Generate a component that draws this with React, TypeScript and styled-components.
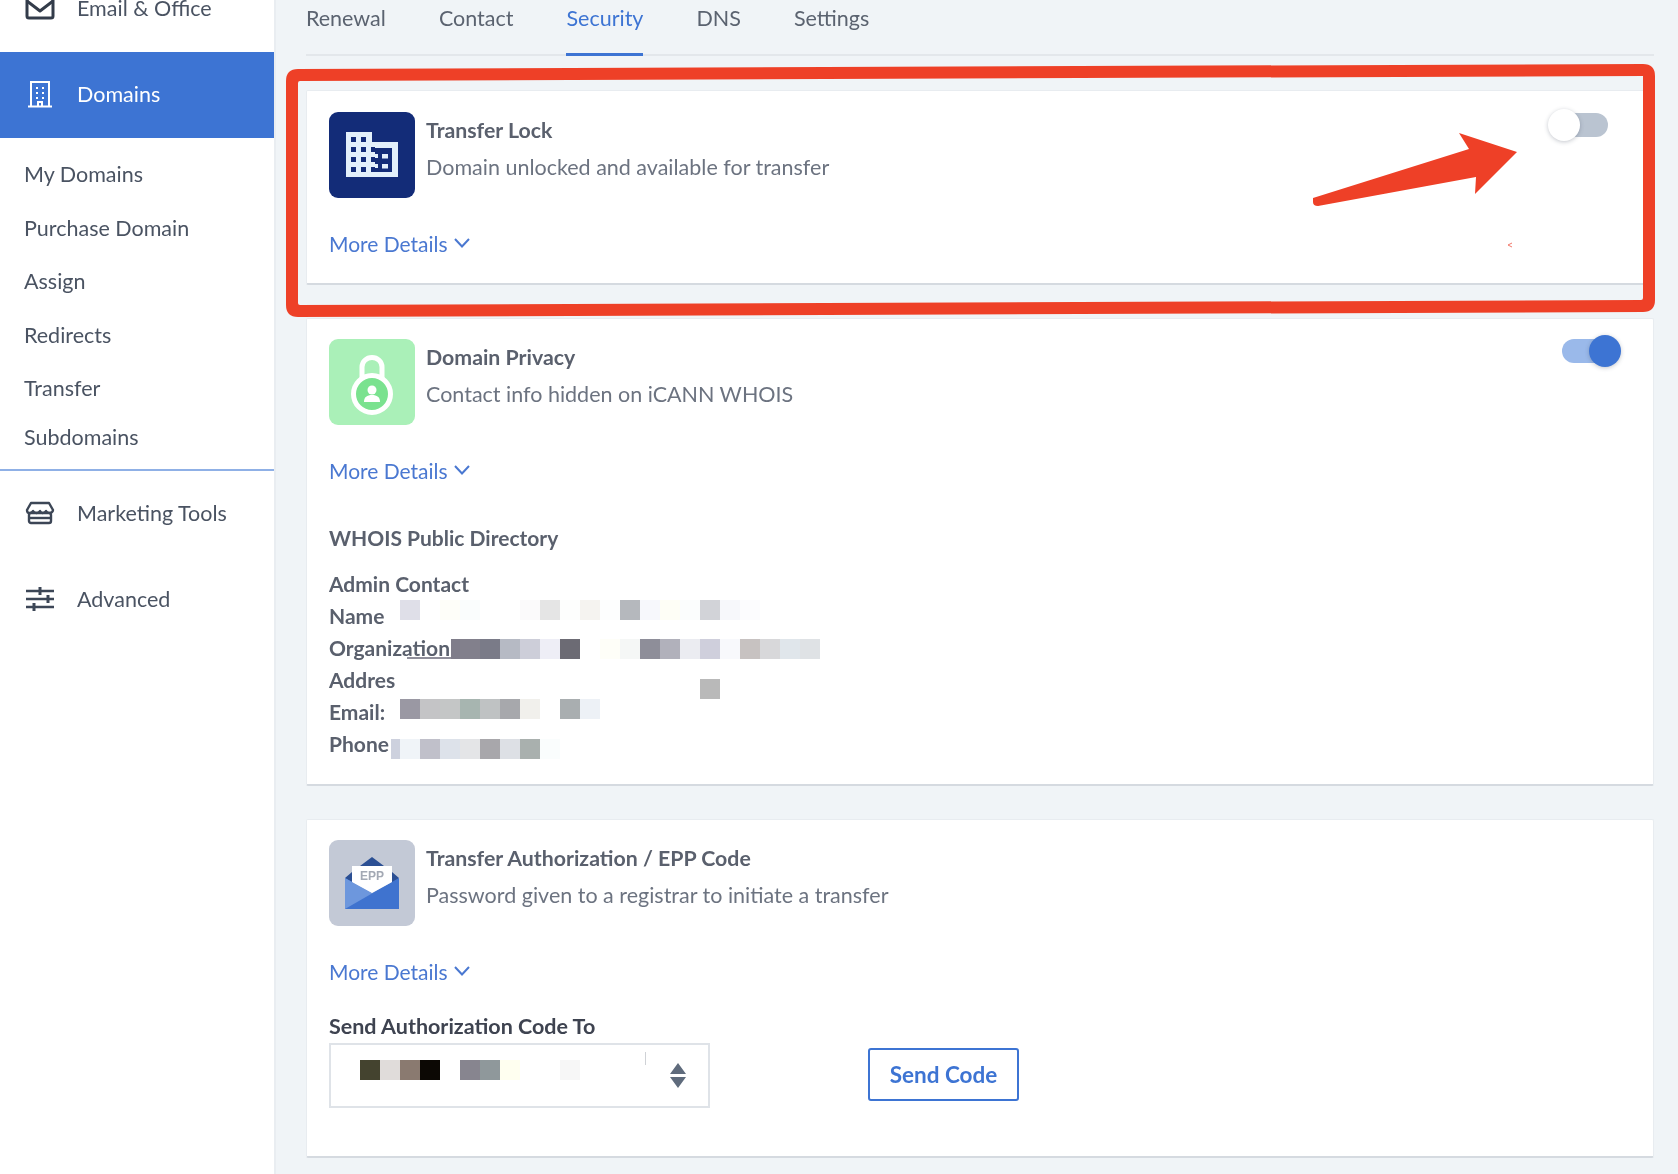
import React from "react";
import styled, { createGlobalStyle } from "styled-components";

const GlobalStyle = createGlobalStyle`
  html, body {
    margin: 0;
    padding: 0;
    overflow: hidden;
    background: #f0f4f7;
  }
  * { box-sizing: border-box; }
`;

const Page = styled.div`
  position: relative;
  display: flex;
  width: 1678px;
  height: 1174px;
  overflow: hidden;
  font-family: "Lato", "Liberation Sans", sans-serif;
  font-size: 21.5px;
  color: #515967;
  background: #f0f4f7;
  filter: blur(0.45px);
`;

const Sidebar = styled.nav`
  flex: 0 0 274px;
  background: #fff;
  box-shadow: 2px 0 0 #e9edf1;
`;

const NavItem = styled.div<{ $active?: boolean }>`
  display: flex;
  align-items: center;
  gap: 22px;
  height: 86px;
  padding: 0 0 3px 25px;
  color: ${(p) => (p.$active ? "#fff" : "#4a5362")};
  background: ${(p) => (p.$active ? "#3d74d3" : "transparent")};
  svg { flex: 0 0 30px; }
`;

const ClippedItem = styled(NavItem)`
  margin-top: -34px;
`;

const SubMenu = styled.div`
  height: 333px;
  padding: 10px 0 0 24px;
  border-bottom: 2px solid #8fb0e6;
`;

const SubItem = styled.div<{ $tight?: boolean }>`
  height: 53.5px;
  line-height: 53.5px;
  margin-top: ${(p) => (p.$tight ? "-5px" : "0")};
  color: #4a5362;
`;

const Main = styled.main`
  flex: 1;
  padding: 0 24px 0 32px;
`;

const Tabs = styled.div`
  display: flex;
  gap: 53px;
  height: 56px;
  border-bottom: 2px solid #e3e7eb;
`;

const Tab = styled.div<{ $active?: boolean }>`
  height: 56px;
  line-height: 36px;
  color: ${(p) => (p.$active ? "#3d74d3" : "#5b6370")};
  border-bottom: 3px solid ${(p) => (p.$active ? "#3d74d3" : "transparent")};
`;

const Card = styled.section<{ $height: number; $top: number; $pad: number }>`
  height: ${(p) => p.$height}px;
  margin-top: ${(p) => p.$top}px;
  padding: ${(p) => p.$pad}px 22px;
  background: #fff;
  border: 1px solid #e8ecf0;
  border-bottom: 2px solid #d5dae0;
  border-radius: 2px;
`;

const CardHead = styled.div`
  display: flex;
  gap: 11px;
  position: relative;
`;

const Tile = styled.div<{ $bg: string }>`
  display: flex;
  align-items: center;
  justify-content: center;
  flex: 0 0 86px;
  height: 86px;
  border-radius: 9px;
  background: ${(p) => p.$bg};
`;

const Title = styled.div`
  margin-top: 6px;
  line-height: 24px;
  font-size: 21.3px;
  font-weight: 700;
  color: #5a606d;
`;

const Desc = styled.div`
  margin-top: 13px;
  line-height: 24px;
  color: #6c7380;
`;

const More = styled.div`
  display: flex;
  align-items: center;
  gap: 5px;
  height: 20px;
  margin-top: 35px;
  font-size: 21px;
  color: #4a78d1;
`;

const Toggle = styled.div<{ $on?: boolean }>`
  position: absolute;
  top: ${(p) => (p.$on ? "0" : "1px")};
  right: ${(p) => (p.$on ? "11px" : "23px")};
  width: ${(p) => (p.$on ? "58px" : "44px")};
  height: 24px;
  border-radius: 12px;
  background: ${(p) => (p.$on ? "#9ab9ea" : "#bac4d1")};
  &::after {
    content: "";
    position: absolute;
    top: -4px;
    ${(p) => (p.$on ? "right: -1px;" : "left: -16px;")}
    width: 32px;
    height: 32px;
    border-radius: 50%;
    background: ${(p) => (p.$on ? "#3d74d3" : "#fff")};
    box-shadow: 0 1px 4px rgba(60, 70, 90, 0.3);
  }
`;

const DirectoryTitle = styled.div`
  margin-top: 46px;
  line-height: 24px;
  font-size: 21px;
  font-weight: 700;
  color: #5a606d;
`;

const ContactHead = styled.div`
  margin: 22px 0 4px;
  line-height: 24px;
  font-size: 21px;
  font-weight: 700;
  color: #5a606d;
`;

const Row = styled.div`
  position: relative;
  height: 32px;
  line-height: 32px;
  font-size: 21px;
  font-weight: 700;
  color: #5a606d;
`;

const Mosaic = styled.div<{ $left: number; $top: number }>`
  position: absolute;
  left: ${(p) => p.$left}px;
  top: ${(p) => p.$top}px;
  display: flex;
`;

const Cell = styled.i<{ $color: string; $narrow?: boolean }>`
  display: block;
  width: ${(p) => (p.$narrow ? "9px" : "20px")};
  height: 20px;
  background: ${(p) => p.$color};
`;

const Smear = styled.i`
  position: absolute;
  left: 78px;
  top: 25px;
  width: 44px;
  height: 2px;
  background: #8f8e9a;
`;

const SendLabel = styled.div`
  margin-top: 33px;
  line-height: 24px;
  font-weight: 700;
  color: #3e4350;
`;

const SendRow = styled.div`
  display: flex;
  align-items: center;
  gap: 158px;
  margin-top: 5px;
`;

const Select = styled.div`
  position: relative;
  flex: 0 0 381px;
  height: 65px;
  background: #fff;
  border: 2px solid #dfe3e8;
  svg {
    position: absolute;
    right: 22px;
    top: 18px;
  }
  &::after {
    content: "";
    position: absolute;
    left: 314px;
    top: 7px;
    width: 1px;
    height: 13px;
    background: #cfd2d6;
  }
`;

const SendButton = styled.div`
  width: 151px;
  height: 53px;
  margin-bottom: 2px;
  line-height: 49px;
  text-align: center;
  font-size: 22.5px;
  font-weight: 700;
  color: #3d74d3;
  background: #fff;
  border: 2px solid #3d74d3;
  border-radius: 3px;
`;

const Annotation = styled.svg`
  position: absolute;
  left: 0;
  top: 0;
  pointer-events: none;
`;

const Chevron = () => (
  <svg width="18" height="12" viewBox="0 0 18 12" fill="none" stroke="#4a78d1" strokeWidth="2">
    <path d="M2 2l7 7.5L16 2" />
  </svg>
);

const MailIcon = () => (
  <svg width="30" height="24" viewBox="0 0 30 24" fill="none" stroke="#333c4a" strokeWidth="3" strokeLinejoin="round">
    <rect x="2" y="2" width="26" height="20" rx="2" />
    <path d="M2 5l13 10L28 5" />
  </svg>
);

const BuildingOutline = () => (
  <svg width="30" height="28" viewBox="0 0 30 28" fill="none" stroke="#fff" strokeWidth="2">
    <path d="M6 26V2h18v24M3 26.500h24" />
    <path d="M12 7v2M18 7v2M12 12v2M18 12v2M12 17v2M18 17v2M13 26v-4h4v4" />
  </svg>
);

const StoreIcon = () => (
  <svg width="30" height="24" viewBox="0 0 30 24" fill="none" stroke="#3c4656" strokeWidth="2.4" strokeLinejoin="round">
    <path d="M6 2h18l4 7c0 2-2 3-3.500 3s-3-1-3.500-2c-.5 1-2 2-3.500 2S15.500 11 15 10c-.5 1-2 2-3.500 2S8.500 11 8 10c-.5 1-2 2-3.500 2S2 11 2 9z" />
    <rect x="4" y="12" width="22" height="10" rx="2" />
    <path d="M4 17h22" />
  </svg>
);

const SlidersIcon = () => (
  <svg width="30" height="24" viewBox="0 0 30 24" fill="none" stroke="#3c4656" strokeWidth="2.400">
    <path d="M1 4h28M1 12h28M1 20h28" />
    <path d="M15 0v8M23 8v8M9 16v8" strokeWidth="3" />
  </svg>
);

const BuildingTile = () => (
  <svg width="52" height="46" viewBox="0 0 52 46">
    <path fill="#e3f0fb" d="M0 0h26v10h26v35H0z" />
    <path fill="#132c78" d="M29 16h17v24H29z" />
    <path fill="#e3f0fb" d="M36 22h6v4.500h-6zM36 32h6v4.500h-6zM29 22h3v4h-3zM29 32h3v4h-3z" />
    <path
      fill="#132c78"
      d="M5 5h5v5H5zM15 5h5v5h-5zM5 15h5v5H5zM15 15h5v5h-5zM5 25h5v5H5zM15 25h5v5h-5zM5 35h5v5H5zM15 35h5v5h-5zM25 25h4v5h-4zM25 35h4v5h-4zM25 15h4v5h-4z"
    />
  </svg>
);

const LockTile = () => (
  <svg width="46" height="66" viewBox="0 0 46 66">
    <path d="M13 30V18a10 9.500 0 0120 0v12" fill="#aaf0b8" stroke="#fff" strokeWidth="5" />
    <circle cx="23" cy="45" r="18.500" fill="#7ae28f" stroke="#fff" strokeWidth="5" />
    <circle cx="23" cy="41" r="4.500" fill="#fff" />
    <path d="M15 53c0-5 3-7 8-7s8 2 8 7z" fill="#fff" />
  </svg>
);

const EppTile = () => (
  <svg width="54" height="52" viewBox="0 0 54 52">
    <path fill="#2b4f93" d="M27 0l12 9H15z" />
    <path fill="#2b4f93" d="M0 21l7-6v12zM54 21l-7-6v12z" />
    <path fill="#3f73cf" d="M0 21l27 15 27-15v31H0z" />
    <path fill="#6d97dd" d="M0 21l27 15 6-3L0 52z" />
    <path fill="#fff" d="M7 9h40v16L27 36 7 25z" />
    <text x="27" y="23" textAnchor="middle" fontSize="12" fontWeight="700" fill="#a3a9b4" fontFamily="Liberation Sans, sans-serif">
      EPP
    </text>
  </svg>
);

const Updown = () => (
  <svg width="16" height="25" viewBox="0 0 16 25" fill="#5f6b7c">
    <path d="M8 0l8 11H0zM0 14h16L8 25z" />
  </svg>
);

const paint = (colors: string[], narrowFirst = false) =>
  colors.map((c, i) => <Cell key={i} $color={c} $narrow={narrowFirst && i === 0} />);

const w = "transparent";

const nameCells = [
  "#dfdfe8", w, "#fefef9", "#fafdfd", w, w, "#fbfafb", "#e5e5e5", "#fdfefd", "#f5f3f0", "#fdfefe",
  "#b5b8bd", "#f7f8fc", "#fefef6", "#fbfdfd", "#d2d3d8", "#f7f8fb", "#fcfcfe",
];
const orgCells = [
  "#7f7d8a", "#82808c", "#7a7b88", "#b6bac4", "#cdced9", "#eeeef6", "#6c6b74", w, "#fefef8", "#f5f7f6",
  "#8e8e99", "#b1b1bb", "#ebecf1", "#cfcfdc", "#f8f9fc", "#c7c2c1", "#d8d8da", "#e0e6eb", "#dfe2e5",
];
const emailCells = [
  "#9a98a3", "#c4c4c6", "#c4c6c6", "#a7b5b0", "#bfc2c3", "#a7a8ac", "#f1f0ec", w, "#a9aeb0", "#edf1f6",
];
const phoneCells = [
  "#cdd1de", "#f0f4f8", "#c0c0ca", "#dde2ea", "#e4e5e7", "#a8a7ab", "#dde0e5", "#a9b0ae", "#fafdfd",
];
const selectCells = [
  "#44432f", "#e0dcda", "#8a7a70", "#0c0804", w, "#87858f", "#8f989b", "#fffff0", w, w, "#f7f7f7",
];

export default function App() {
  return (
    <Page>
      <GlobalStyle />
      <Sidebar>
        <ClippedItem>
          <MailIcon />
          Email &amp; Office
        </ClippedItem>
        <NavItem $active>
          <BuildingOutline />
          Domains
        </NavItem>
        <SubMenu>
          <SubItem>My Domains</SubItem>
          <SubItem>Purchase Domain</SubItem>
          <SubItem>Assign</SubItem>
          <SubItem>Redirects</SubItem>
          <SubItem>Transfer</SubItem>
          <SubItem $tight>Subdomains</SubItem>
        </SubMenu>
        <NavItem>
          <StoreIcon />
          Marketing Tools
        </NavItem>
        <NavItem>
          <SlidersIcon />
          Advanced
        </NavItem>
      </Sidebar>
      <Main>
        <Tabs>
          <Tab>Renewal</Tab>
          <Tab>Contact</Tab>
          <Tab $active>Security</Tab>
          <Tab>DNS</Tab>
          <Tab>Settings</Tab>
        </Tabs>

        <Card $top={34} $height={195} $pad={21}>
          <CardHead>
            <Tile $bg="#132c78">
              <BuildingTile />
            </Tile>
            <div>
              <Title>Transfer Lock</Title>
              <Desc>Domain unlocked and available for transfer</Desc>
            </div>
            <Toggle />
          </CardHead>
          <More>
            More Details <Chevron />
          </More>
        </Card>

        <Card $top={33} $height={468} $pad={20}>
          <CardHead>
            <Tile $bg="#aaf0b8">
              <LockTile />
            </Tile>
            <div>
              <Title>Domain Privacy</Title>
              <Desc>Contact info hidden on iCANN WHOIS</Desc>
            </div>
            <Toggle $on />
          </CardHead>
          <More>
            More Details <Chevron />
          </More>
          <DirectoryTitle>WHOIS Public Directory</DirectoryTitle>
          <ContactHead>Admin Contact</ContactHead>
          <Row>
            Name
            <Mosaic $left={71} $top={0}>{paint(nameCells)}</Mosaic>
          </Row>
          <Row>
            Organization
            <Smear />
            <Mosaic $left={122} $top={7}>{paint(orgCells, true)}</Mosaic>
          </Row>
          <Row>
            Address
            <Mosaic $left={66} $top={6}>{paint(["#fff"])}</Mosaic>
            <Mosaic $left={371} $top={15}>{paint(["#b9b9b9"])}</Mosaic>
          </Row>
          <Row>
            Email:
            <Mosaic $left={71} $top={3}>{paint(emailCells)}</Mosaic>
          </Row>
          <Row>
            Phone
            <Mosaic $left={62} $top={11}>{paint(phoneCells, true)}</Mosaic>
          </Row>
        </Card>

        <Card $top={33} $height={339} $pad={20}>
          <CardHead>
            <Tile $bg="#c3c9d6">
              <EppTile />
            </Tile>
            <div>
              <Title>Transfer Authorization / EPP Code</Title>
              <Desc>Password given to a registrar to initiate a transfer</Desc>
            </div>
          </CardHead>
          <More>
            More Details <Chevron />
          </More>
          <SendLabel>Send Authorization Code To</SendLabel>
          <SendRow>
            <Select>
              <Mosaic $left={29} $top={15}>{paint(selectCells)}</Mosaic>
              <Updown />
            </Select>
            <SendButton>Send Code</SendButton>
          </SendRow>
        </Card>
      </Main>

      <Annotation width="1678" height="1174" viewBox="0 0 1678 1174">
        <path
          fill="#ee4027"
          fillRule="evenodd"
          d="M298 69L1643 64Q1655 64 1655 76L1655 300Q1655 312 1643 312L298 317Q286 317 286 305L286 81Q286 69 298 69ZM300 81Q298 81 298 83L298 303Q298 305 300 305L1641 300Q1643 300 1643 298L1643 76Z"
        />
        <path
          fill="#ee4027"
          d="M1313 198L1469 149L1459 133L1517 152L1475 194L1476 177L1318 206Q1313 206 1313 202Z"
        />
        <path d="M1512 243l-4 2 4 2" fill="none" stroke="#f2786a" strokeWidth="1" />
      </Annotation>
    </Page>
  );
}
